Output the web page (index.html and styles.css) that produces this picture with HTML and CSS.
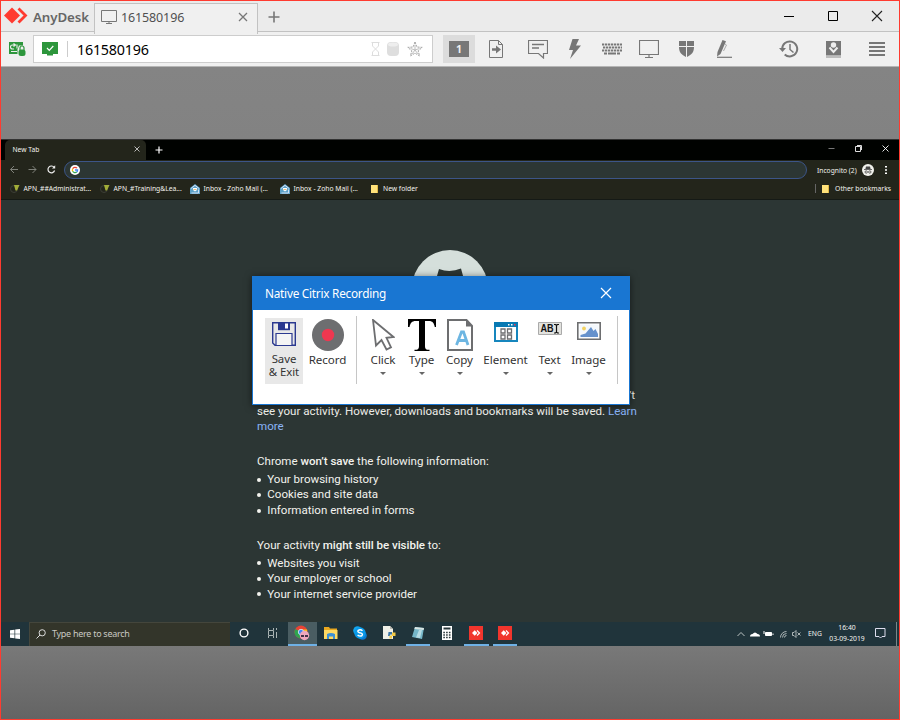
FILE: index.html
```html
<!DOCTYPE html>
<html lang="en">
<head>
<meta charset="utf-8">
<title>AnyDesk</title>
<link rel="stylesheet" href="styles.css">
</head>
<body>
<div class="app">
  <header class="titlebar">
    <div class="brand">
      <svg width="24" height="18" viewBox="0 0 24 18"><path d="M0 8.5L8 .5l8 8-8 8z" fill="#ff3b30"/><path d="M14.5 1.5l7 7-7 7" fill="none" stroke="#ff3b30" stroke-width="2.8"/></svg>
      <span>AnyDesk</span>
    </div>
    <div class="session-tab">
      <svg width="16" height="14" viewBox="0 0 16 14" fill="none" stroke="#777"><path d="M.5.5h15v11H.5zM8 11.500v2M5 13.500h6"/></svg>
      <span>161580196</span>
      <svg class="tab-x" width="10" height="10" viewBox="0 0 10 10" stroke="#777" stroke-width="1.3"><path d="M1 1l8 8M9 1L1 9"/></svg>
    </div>
    <svg class="plus" width="12" height="12" viewBox="0 0 12 12" stroke="#777" stroke-width="1.6"><path d="M6 .5v11M.5 6h11"/></svg>
    <div class="winctl">
      <svg width="44" height="30" viewBox="0 0 44 30" stroke="#000"><path d="M17 15.500h10"/></svg>
      <svg width="44" height="30" viewBox="0 0 44 30" stroke="#000" fill="none"><path d="M17.500 10.500h9v9h-9z"/></svg>
      <svg width="44" height="30" viewBox="0 0 44 30" stroke="#222" stroke-width="1.1"><path d="M17 10l10 10M27 10L17 20"/></svg>
    </div>
  </header>

  <div class="toolbar">
    <svg class="conn" width="17" height="16" viewBox="0 0 17 16"><path d="M0 1h14v12H0z" fill="#2d963c"/><path d="M5.500 4H3.500a2 2 0 0 0 0 4H5M4.500 2.500L6.500 4 4.500 5.500M8 3.500v4M2 10.500h6" fill="none" stroke="#eee" stroke-width="1.100"/><path d="M8.500 16V8.500L10 4.500h4l2.500 4V16z" fill="#f0f0f0"/><rect x="9.500" y="8.500" width="7" height="6.500" rx="2.500" fill="#2d963c"/><path d="M11 9.500V7a2 2 0 0 1 4 0v2.500" fill="none" stroke="#2d963c" stroke-width="1.200"/></svg>
    <div class="address">
      <svg class="ok" width="16" height="14" viewBox="0 0 16 14"><path d="M0 0h16v12h-5v1.500H5V12H0z" fill="#2d963c"/><path d="M5 6l2.300 2.300L11.300 4" fill="none" stroke="#fff" stroke-width="1.200"/></svg>
      <span class="rule"></span>
      <span class="addr-text">161580196</span>
      <svg width="56" height="16" viewBox="0 0 56 16"><g fill="none" stroke="#ddd"><path d="M.500 1.500h8M.500 14.500h8M1.500 2v3l3 3 3-3V2M1.500 14v-3l3-3 3 3v3"/></g><rect x="16" y="1" width="12" height="14" rx="4" fill="#dedede"/><ellipse cx="22" cy="3.500" rx="5" ry="2" fill="#eee"/><path d="M44 1l1.900 5 5.300.4-4 3.500 1.400 5-4.600-2.700-4.600 2.700 1.400-5-4-3.500 5.300-.4z" fill="#fafafa" stroke="#999" stroke-width=".9" stroke-dasharray="2 1"/><path d="M44 4v5M39.500 7.500l4.500 1.500 4.500-1.500M44 9l3 4M44 9l-3 4" stroke="#aaa" stroke-width=".7" fill="none"/></svg>
    </div>
    <div class="tools">
      <div class="monitor-btn"><b>1</b></div>
      <div><svg width="14" height="18" viewBox="0 0 14 18" fill="none" stroke="#777"><path d="M.500.500h9l4 4v13h-13zM9.500.500v4h4"/><path d="M3 9.500h6" stroke-width="2.500"/><path d="M7 5.500l5 4-5 4z" fill="#777" stroke="none"/></svg></div>
      <div><svg width="20" height="20" viewBox="0 0 20 20" fill="none" stroke="#777"><path d="M.500 1.500h19v13h-4V19l-5-4.500H.500z" stroke-width="1.200"/><path d="M4 5.500h12M4 9h7" stroke-width="1.500"/></svg></div>
      <div><svg width="14" height="20" viewBox="0 0 14 20"><path d="M5.500 0H12L9 6.500h5L3 20l3-9H2z" fill="#777"/></svg></div>
      <div><svg width="20" height="12" viewBox="0 0 20 12" stroke="#777" fill="none" stroke-width="2"><path d="M0 1.500h20M1 4.500h19M0 7.500h20" stroke-dasharray="2.300 .7"/><path d="M2 10.500h3M6 10.500h8M15 10.500h3"/></svg></div>
      <div><svg width="20" height="18" viewBox="0 0 20 18" fill="none" stroke="#777"><path d="M.500.500h19v14H.500zM10 14.500v3M6 17.500h8" stroke-width="1.200"/></svg></div>
      <div class="left1"><svg width="15" height="16" viewBox="0 0 15 16"><path d="M0 0h7v5H0zM8 0h7v5H8zM0 6h7v10C2 13.500 0 11 0 6zM15 6H8v10c5-2.500 7-5 7-10z" fill="#777"/></svg></div>
      <div><svg width="16" height="18" viewBox="0 0 16 18"><path d="M6.500 0l3.500 1.200L4.500 14 1 16.500 1.500 12z" fill="#777"/><path d="M9 4l1.500 1-3 6" stroke="#aaa" fill="none"/><path d="M1 17.300h15" stroke="#777" stroke-width="1.200"/></svg></div>
      <div></div>
      <div><svg width="20" height="18" viewBox="0 0 20 18" fill="none" stroke="#777" stroke-width="2"><path d="M3.200 9a7.500 7.500 0 1 1 2.500 5.500"/><path d="M0 8h7l-3.500 4z" fill="#777" stroke="none"/><path d="M11 4v5.500l3.500 3" stroke-width="1.500"/></svg></div>
      <div><svg width="15" height="18" viewBox="0 0 15 18"><path d="M0 1h15v14.500H0z" fill="#777"/><circle cx="7.500" cy="5" r="2.700" fill="#eee"/><path d="M3.500 7.500L7.500 12l4-4.500" stroke="#eee" fill="none" stroke-width="2"/><path d="M0 17h15" stroke="#888"/></svg></div>
      <div><svg width="16" height="14" viewBox="0 0 16 14" stroke="#777" stroke-width="1.800"><path d="M0 1h16M0 5h16M0 9h16M0 13h16"/></svg></div>
    </div>
  </div>

  <main class="stage">
    <section class="remote">
      <div class="c-tabs">
        <div class="c-tab"><span>New Tab</span><svg width="6" height="6" viewBox="0 0 6 6" stroke="#ccc" stroke-width=".9"><path d="M.5.5l5 5M5.500.5l-5 5"/></svg></div>
        <svg class="c-plus" width="8" height="8" viewBox="0 0 8 8" stroke="#fff" stroke-width="1.200"><path d="M4 .5v7M.5 4h7"/></svg>
        <div class="c-win">
          <svg width="27" height="20" viewBox="0 0 27 20" stroke="#777"><path d="M10.500 8.500h6"/></svg>
          <svg width="27" height="20" viewBox="0 0 27 20" fill="none" stroke="#ddd"><path d="M10.500 6.500h5v5h-5zM12 5.500h4.500V10"/></svg>
          <svg width="27" height="20" viewBox="0 0 27 20" stroke="#fff" stroke-width=".9"><path d="M10.500 5.500l6 6M16.500 5.500l-6 6"/></svg>
        </div>
      </div>
      <div class="c-nav">
        <svg width="48" height="10" viewBox="0 0 48 10" fill="none" stroke="#7f817a"><path d="M9 4.500H1.500M5 1L1.500 4.500 5 8M19.500 4.500h7.500M23.500 1L27 4.500 23.500 8"/><path d="M45.200 2.500a3.400 3.400 0 1 0 .4 3" stroke="#eee" stroke-width="1.200"/><path d="M46.200.3V3.500H43z" fill="#eee" stroke="none"/></svg>
        <div class="omni"><svg width="10" height="10" viewBox="0 0 10 10"><circle cx="5" cy="5" r="5" fill="#fff"/><g fill="none" stroke-width="1.300"><path d="M7 3.200A2.600 2.600 0 0 0 2.700 3.700" stroke="#ea4335"/><path d="M2.700 3.700a2.600 2.600 0 0 0 0 2.600" stroke="#fbbc05"/><path d="M2.700 6.300A2.600 2.600 0 0 0 6.700 7" stroke="#34a853"/><path d="M6.700 7A2.600 2.600 0 0 0 7.600 5H5" stroke="#4285f4"/></g></svg></div>
        <span class="inc-label">Incognito (2)</span>
        <svg class="inc-ico" width="12" height="12" viewBox="0 0 12 12"><circle cx="6" cy="6" r="6" fill="#f1f1ec"/><path d="M4 2.500h4l.6 2.500H3.400z" fill="#444"/><path d="M2 5.500h8" stroke="#444" stroke-width=".8"/><g fill="none" stroke="#444" stroke-width=".8"><circle cx="4.200" cy="8" r="1.200"/><circle cx="7.800" cy="8" r="1.200"/></g></svg>
        <svg width="2" height="10" viewBox="0 0 2 10" fill="#fff"><path d="M0 1h2v1.600H0zM0 4.200h2v1.600H0zM0 7.400h2V9H0z"/></svg>
      </div>
      <div class="c-marks">
        <div class="mk"><svg width="10" height="9" viewBox="0 0 10 9"><circle cx="4" cy="5" r="3.500" fill="none" stroke="#3c3f36"/><path d="M4 1h5.500L7 6.500H5.500z" fill="#a2ad38"/></svg><span>APN_##Administrat...</span></div>
        <div class="mk"><svg width="10" height="9" viewBox="0 0 10 9"><circle cx="4" cy="5" r="3.500" fill="none" stroke="#3c3f36"/><path d="M4 1h5.500L7 6.500H5.500z" fill="#a2ad38"/></svg><span>APN_#Training&amp;Lea...</span></div>
        <div class="mk"><svg width="10" height="10" viewBox="0 0 10 10"><path d="M0 4l5-4 5 4v6H0z" fill="#5da2c9"/><path d="M1 4.500L5 1.300l4 3.200M1.500 9h7V5.500" stroke="#eef" fill="none" stroke-width=".8"/><path d="M3 4h4v2L5 7.500 3 6z" fill="#fff"/><path d="M3.500 5.500h3" stroke="#d99c43" stroke-width=".7"/></svg><span>Inbox - Zoho Mail (...</span></div>
        <div class="mk"><svg width="10" height="10" viewBox="0 0 10 10"><path d="M0 4l5-4 5 4v6H0z" fill="#5da2c9"/><path d="M1 4.500L5 1.300l4 3.200M1.500 9h7V5.500" stroke="#eef" fill="none" stroke-width=".8"/><path d="M3 4h4v2L5 7.500 3 6z" fill="#fff"/><path d="M3.500 5.500h3" stroke="#d99c43" stroke-width=".7"/></svg><span>Inbox - Zoho Mail (...</span></div>
        <div class="mk fold"><i class="folder"></i><span>New folder</span></div>
        <div class="mk other"><i class="folder"></i><span>Other bookmarks</span></div>
      </div>
      <div class="page">
        <svg class="spy" width="76" height="76" viewBox="0 0 76 76"><circle cx="38" cy="38" r="38" fill="#d5dfdb"/><path d="M27 19q11 4 22-.500l3 11H24z" fill="#2c3634"/></svg>
        <div class="copy">
          <p class="intro"><span class="first">Now you can browse privately, and other people who use this device won’t</span>see your activity. However, downloads and bookmarks will be saved. <a>Learn</a><br><a>more</a></p>
          <p class="lead">Chrome <b>won’t save</b> the following information:</p>
          <ul><li>Your browsing history</li><li>Cookies and site data</li><li>Information entered in forms</li></ul>
          <p class="lead">Your activity <b>might still be visible</b> to:</p>
          <ul><li>Websites you visit</li><li>Your employer or school</li><li>Your internet service provider</li></ul>
        </div>
      </div>
      <div class="taskbar">
        <div class="start"><svg width="10" height="10" viewBox="0 0 10 10" fill="#fff"><path d="M0 1.300L4.500.7v4H0zM5.200.6L10 0v4.700H5.200zM0 5.300h4.500v4L0 8.700zM5.200 5.300H10V10l-4.800-.6z"/></svg></div>
        <div class="search"><svg width="10" height="10" viewBox="0 0 10 10" fill="none" stroke="#ddd"><circle cx="6.200" cy="3.800" r="3.100"/><path d="M4 6L.5 9.500"/></svg><span>Type here to search</span></div>
        <div class="cell"><svg width="10" height="10" viewBox="0 0 10 10"><circle cx="5" cy="5" r="3.900" fill="none" stroke="#fff" stroke-width="1.400"/></svg></div>
        <div class="cell"><svg width="12" height="10" viewBox="0 0 12 10" fill="none" stroke="#aab4b4"><path d="M1.500 0v2.500h5V0M1.500 10V7.500h5V10M1.500 3v4M6.500 3v4M9.500 0v2M9.500 4v6"/></svg></div>
        <div class="cell active"><svg width="16" height="16" viewBox="0 0 16 16"><circle cx="7" cy="7" r="6.500" fill="#e94335"/><path d="M1.300 4L7 7l-1 6.500A6.500 6.500 0 0 1 1.300 4z" fill="#2da44f"/><path d="M7 4.500h6q1 3-1 6L7 13z" fill="#fbc116"/><circle cx="7" cy="7" r="2.700" fill="#4285f4" stroke="#fff" stroke-width=".7"/><circle cx="10.500" cy="10.500" r="4.700" fill="#f0a7bd"/><path d="M7 10h3v2H7zM11 10h3v2h-3z" fill="#46334a"/></svg></div>
        <div class="cell"><svg width="14" height="12" viewBox="0 0 14 12"><path d="M0 0h5l1 1.500h7V5H0z" fill="#e9a820"/><path d="M0 3h13.500v9H0z" fill="#ffda63"/><path d="M3 12V7q4-2 8 0v5H9V9.500H5V12z" fill="#3d91d5"/></svg></div>
        <div class="cell"><svg width="14" height="14" viewBox="0 0 14 14"><circle cx="4.500" cy="4.500" r="4.300" fill="#13a5ee"/><circle cx="9.500" cy="9.500" r="4.300" fill="#087ad4"/><circle cx="7" cy="7" r="5.700" fill="#0999e8"/><path d="M9.500 4.800Q7.500 3 5.300 4.300q-1.300 1.700 1.300 2.400l1.500.4q2.200 1 .7 2.600-2.200 1-4.200-.7" fill="none" stroke="#fff" stroke-width="1.500"/></svg></div>
        <div class="cell"><svg width="14" height="14" viewBox="0 0 14 14"><path d="M1 0h7l3 3v10H1z" fill="#f0f0e7"/><path d="M8 0l3 3H8z" fill="#b8b8b0"/><path d="M6.500 6h3.500v2.500H8V10H6z" fill="#3b74a8"/><path d="M10 6.500h3.500v3.500H10v2.500H7.500V9.500H10z" fill="#f2c944"/></svg></div>
        <div class="cell run"><svg width="14" height="14" viewBox="0 0 14 14"><path d="M4 1l9 1-2 11-10-2z" fill="#75b6c8"/><path d="M4 1l9 1-.4 2-9.200-1z" fill="#d8e4e2"/><path d="M8 4l3 0-2 8-4-.6z" fill="#b6dce4"/></svg></div>
        <div class="cell"><svg width="10" height="14" viewBox="0 0 10 14"><path d="M0 0h10v14H0z" fill="#fff"/><path d="M1.500 1.500h7v2h-7z" fill="#29373a"/><path d="M1.300 6.500h8M1.300 9h8M1.300 11.500h8" stroke="#29373a" stroke-width="1.400" stroke-dasharray="1.600 1.200"/></svg></div>
        <div class="cell run split"><svg width="14" height="14" viewBox="0 0 14 14"><path d="M0 0h14v14H0z" fill="#f1352d"/><path d="M3 7l2.700-2.700L8.400 7 5.700 9.700z" fill="#fff"/><path d="M8 4.500L10.500 7 8 9.500" fill="none" stroke="#fff" stroke-width="1.200"/></svg></div>
        <div class="cell run"><svg width="14" height="14" viewBox="0 0 14 14"><path d="M0 0h14v14H0z" fill="#f1352d"/><path d="M3 7l2.700-2.700L8.400 7 5.700 9.700z" fill="#fff"/><path d="M8 4.500L10.500 7 8 9.500" fill="none" stroke="#fff" stroke-width="1.200"/></svg></div>
        <div class="tray">
          <svg width="65" height="10" viewBox="0 0 65 10" fill="none" stroke="#bbc3c3"><path d="M.5 7L4 3.500 7.500 7"/><path d="M13 7.500q0-2.500 2.500-2.500Q18 2 20.500 5q2.500 0 2.500 2.500z" fill="#fff" stroke="none"/><path d="M28.500 3.500h6v3h-6z" fill="#fff" stroke="#fff"/><path d="M27 2v3M36 4.500v1.500" stroke="#fff"/><path d="M43.500 8.500a6 6 0 0 1 6-6M45.500 8.500a4 4 0 0 1 4-4M47.500 8.500a2 2 0 0 1 2-2" stroke-width=".9"/><path d="M55.500 3.500h1.500l2-2v7l-2-2h-1.500zM60.500 3.500l3 3M63.500 3.500l-3 3" stroke-width=".9"/></svg>
          <span class="lang">ENG</span>
          <span class="clock">16:40<br>03-09-2019</span>
          <svg class="note" width="11" height="11" viewBox="0 0 11 11" fill="none" stroke="#dde"><path d="M.5.5h9.500v8H7L5.500 10 4 8.500H.5z"/></svg>
          <i class="peek"></i>
        </div>
      </div>
    </section>
  </main>
</div>

<div class="dialog">
  <div class="d-title"><span>Native Citrix Recording</span><svg width="12" height="12" viewBox="0 0 12 12" stroke="#fff" stroke-width="1.200"><path d="M1 1l10 10M11 1L1 11"/></svg></div>
  <div class="ribbon">
    <div class="act save"><svg width="24" height="24" viewBox="0 0 24 24"><path d="M.7.7h22.600v22.600H3l-2.300-2.300z" fill="none" stroke="#2b3990" stroke-width="1.400"/><path d="M6 .7h12v7.500H6z" fill="#2b3990"/><path d="M13 1.500h3v5h-3z" fill="#fff"/><path d="M4 23V11.500h16V23" fill="#f4f4f4" stroke="#2b3990" stroke-width="1.200"/></svg><div class="two"><span>Save</span><span>&amp; Exit</span></div></div>
    <div class="act"><svg width="32" height="32" viewBox="0 0 32 32"><circle cx="16" cy="16" r="16" fill="#6d6e70"/><circle cx="16" cy="16" r="6.200" fill="#ee3750"/></svg><span>Record</span></div>
    <i class="sep"></i>
    <div class="act drop"><svg width="24" height="32" viewBox="0 0 24 32"><path d="M2 1l20.500 17-7 .8 4.500 9.500-4.500 2.200-5-9.500L5 26.500z" fill="#fff" stroke="#6d6e70" stroke-width="1.800"/></svg><span>Click</span></div>
    <div class="act drop"><svg width="28" height="32" viewBox="0 0 28 32"><path d="M0 0h28l.3 8h-1.500C26 4 24.500 2 21 2h-4v25c0 3 1 3.800 4.500 3.800V32h-15v-1.200C10 30.800 11 30 11 27V2H7.500C4 2 2.300 4 1.500 8H0z" fill="#000"/></svg><span>Type</span></div>
    <div class="act drop"><svg width="26" height="32" viewBox="0 0 26 32"><path d="M1 1h18.500L25 7v24H1z" fill="#fff" stroke="#6d6e70" stroke-width="2"/><path d="M19 1v6.500h6z" fill="#6d6e70"/><path d="M9.500 26l5-13h2l4.500 13M11 21.500h8.500" fill="none" stroke="#6db6e2" stroke-width="2.800"/></svg><span>Copy</span></div>
    <div class="act drop"><svg width="24" height="32" viewBox="0 0 24 32"><path d="M1 4h22v18H1z" fill="#fff" stroke="#1686bd" stroke-width="2"/><path d="M0 3h24v5H0z" fill="#0879b3"/><path d="M14 5h1.500v1.500H14zM17 5h1.500v1.500H17z" fill="#fff"/><path d="M20 5h1.500v1.500H20z" fill="#ee3750"/><path d="M7 10h4v4H7zM13.500 10h4v4h-4zM7 16h4v4H7zM13.500 16h4v4h-4z" fill="none" stroke="#6d6e70" stroke-width="1.300"/></svg><span>Element</span></div>
    <div class="act drop"><svg width="24" height="32" viewBox="0 0 24 32"><path d="M.5 3.500h23v12H.5z" fill="#e2e2de" stroke="#aaa"/><text x="2.500" y="12.800" class="abi" textLength="13" lengthAdjust="spacingAndGlyphs">AB</text><path d="M16 5.500h1.500l1 1 1-1H21M18.500 6v7.500M16 14h1.500l1-1 1 1H21" fill="none" stroke="#111" stroke-width="1.200"/></svg><span>Text</span></div>
    <div class="act drop"><svg width="24" height="32" viewBox="0 0 24 32"><path d="M.800 3.800h22.400v16.400H.8z" fill="#fff" stroke="#6d6e70" stroke-width="1.600"/><path d="M2.500 5.500h19v13h-19z" fill="#f4f8fc"/><circle cx="7" cy="9.500" r="1.900" fill="#f2d262"/><path d="M3.500 18v-2l5-1.500L14 8l2.500 4 2-2 2.500 5v3z" fill="#6591cc"/></svg><span>Image</span></div>
    <i class="sep"></i>
  </div>
</div>
</body>
</html>
```
FILE: styles.css
```css
* { box-sizing: border-box; }
body { margin: 0; width: 900px; height: 720px; overflow: hidden; font-family: "Noto Sans", sans-serif; }
svg { display: block; flex: none; }
i { display: block; }
.app { width: 900px; height: 720px; border: 1px solid #ff3b30; display: flex; flex-direction: column; }

.titlebar { height: 30px; background: #ebebeb; display: flex; align-items: stretch; flex: none; }
.brand { width: 93px; padding-left: 3px; display: flex; align-items: center; border-bottom: 1px solid #c2c2c2; font-weight: 600; font-size: 13.300px; color: #666; height: 31px; }
.brand span { margin: 2px 0 0 5px; letter-spacing: -.1px; }
.session-tab { width: 164px; height: 31px; margin-top: 2px; border: 1px solid #c2c2c2; border-bottom: 0; background: #f0f0f0; display: flex; align-items: center; padding: 0 9px 4px 6px; font-size: 12.500px; color: #505050; z-index: 1; }
.session-tab span { margin-left: 4px; letter-spacing: -.13px; }
.tab-x { margin-left: auto; }
.plus { margin: 10px 0 0 10px; }
.winctl { display: flex; margin-left: auto; }

.toolbar { height: 36px; flex: none; background: #f0f0f0; border-top: 1px solid #c2c2c2; border-bottom: 1px solid #b5b5b5; display: flex; align-items: center; }
.conn { margin-left: 8px; }
.address { width: 400px; height: 28px; margin-left: 7px; background: #fff; border: 1px solid #cdcdcd; display: flex; align-items: center; padding: 0 5px 0 8px; }
.rule { width: 1px; height: 16px; background: #ccc; margin: 0 9px 0 9px; }
.addr-text { font-size: 14.300px; color: #000; letter-spacing: -.22px; flex: 1; }
.tools { margin-left: 10px; height: 34px; display: grid; grid-template-columns: 32px 42px 42px 30px 46px 28px 48px 26px 30px 44px 44px 44px; align-items: center; justify-items: center; }
.left1 { padding-right: 1px; }
.monitor-btn { width: 32px; height: 28px; background: #dcdcdc; display: flex; align-items: center; justify-content: center; }
.monitor-btn b { width: 20px; height: 16px; background: #777; color: #eee; font-size: 10.500px; line-height: 16px; text-align: center; }

.stage { flex: 1; background: linear-gradient(#848484, #828282 11%, #7a7a7a 88%, #646464); padding-top: 72px; }
.remote { width: 898px; height: 507px; border-top: 1px solid #333; display: flex; flex-direction: column; color: #f3f3ee; }
.c-tabs { height: 20px; background: #000200; display: flex; align-items: center; flex: none; }
.c-tab { width: 141px; height: 20px; margin-left: 4px; background: #23251b; border-radius: 5px 5px 0 0; display: flex; align-items: center; justify-content: space-between; padding: 0 6px 2px 7.500px; font-size: 6.700px; }
.c-plus { margin-left: 9px; }
.c-win { margin-left: auto; display: flex; }
.c-nav { height: 21px; background: #23251b; display: flex; align-items: center; flex: none; padding: 0 0 1px 8px; }
.omni { width: 743px; height: 18px; margin-left: 7px; border: 1px solid #3c5588; border-radius: 9px; background: #2c3634; display: flex; align-items: center; padding-left: 5px; }
.inc-label { font-size: 6.700px; width: 45px; margin-left: 10px; white-space: nowrap; }
.inc-ico { margin-right: 11px; }
.c-marks { height: 19px; background: #23251b; border-bottom: 1px solid #151a16; display: flex; align-items: center; flex: none; font-size: 6.750px; padding: 0 8px 3px 9px; }
.mk { width: 90px; display: flex; align-items: center; gap: 3.500px; white-space: nowrap; }
.folder { width: 7px; height: 8px; background: #ffe27a; border-right: 1px solid #dfb846; }
.fold { gap: 5px; padding-left: 1px; }
.other { width: auto; margin-left: auto; border-left: 1px solid #666; padding-left: 6px; gap: 6px; }

.page { flex: 1; background: #2c3634; font-family: Roboto, sans-serif; font-size: 11.560px; line-height: 15.500px; }
.spy { margin: 50px 0 0 411px; }
.copy { margin: 62px 0 0 256px; width: 400px; white-space: nowrap; }
.copy p, .copy ul { margin: 0; }
.intro .first { display: block; width: 378px; direction: rtl; }
.copy a { color: #8ab4f8; }
.lead { padding-top: 19.300px; }
.lead b { font-weight: 500; letter-spacing: -.03px; }
.copy ul { list-style: none; padding: 2.500px 0 0; }
.copy li { display: flex; align-items: center; }
.copy li::before { content: ""; width: 4px; height: 4px; border-radius: 50%; background: #f3f3ee; margin-right: 6.300px; }

.taskbar { height: 24px; flex: none; background: #20343b; display: flex; align-items: stretch; }
.start { width: 28px; display: grid; place-items: center; padding-bottom: 1px; }
.search { width: 201px; background: #33352a; border: 1px solid #44463c; border-right: 0; border-bottom: 0; display: flex; align-items: center; padding: 0 0 2px 6px; font-size: 9px; color: #c9c9c2; }
.search span { margin-left: 6px; letter-spacing: -.28px; }
.cell { width: 29px; display: flex; align-items: center; justify-content: center; padding: 0 2px 2px 0; position: relative; }
.active { background: #4a5d62; }
.run::after, .active::after { content: ""; position: absolute; left: 2px; right: 3px; bottom: 0; height: 2px; background: #6fb1e6; }
.active::after { left: 0; right: 0; }
.split::after { right: 2px; }
.tray { margin-left: auto; display: flex; align-items: center; padding-bottom: 1px; }
.lang { font-size: 6.800px; margin-left: 6px; width: 14px; }
.clock { font-size: 6.800px; line-height: 10.500px; width: 38px; margin-left: 6px; text-align: center; white-space: nowrap; }
.note { margin-left: 9px; }
.peek { width: 1px; height: 24px; background: #78878a; margin: 0 2px 0 10px; }

.dialog { position: absolute; left: 252px; top: 276px; width: 378px; height: 129px; border: 1px solid #1976d2; background: #fff; box-shadow: 0 1px 7px rgba(0,0,0,.55); }
.d-title { height: 33px; background: #1976d2; color: #fff; display: flex; align-items: center; justify-content: space-between; padding: 0 17px 2px 12px; font-size: 11.800px; letter-spacing: -.25px; }
.ribbon { display: grid; grid-template-columns: 38px 49px 10px 42px 35px 41px 51px 37px 41px 16px; padding: 6px 0 0 12px; color: #333; font-size: 11.600px; letter-spacing: -.06px; }
.act { display: flex; flex-direction: column; align-items: center; height: 66px; margin-top: 2px; padding-top: 1px; white-space: nowrap; }
.act span { line-height: 16px; margin-top: 1px; }
.save { background: #e8e8e8; padding-top: 4px; }
.two { display: flex; flex-direction: column; align-items: center; margin-top: 6px; }
.act .two span { line-height: 13px; margin: 0; font-size: 11.400px; }
.drop::after { content: ""; border: 3px solid transparent; border-top-color: #666; margin-top: 4px; }
.sep { width: 1px; height: 68px; background: #c6c6c6; justify-self: center; }
.ribbon .sep:nth-child(3) { justify-self: start; margin-left: 4px; }
.abi { font: bold 10px "Liberation Sans", sans-serif; fill: #111; }
```
